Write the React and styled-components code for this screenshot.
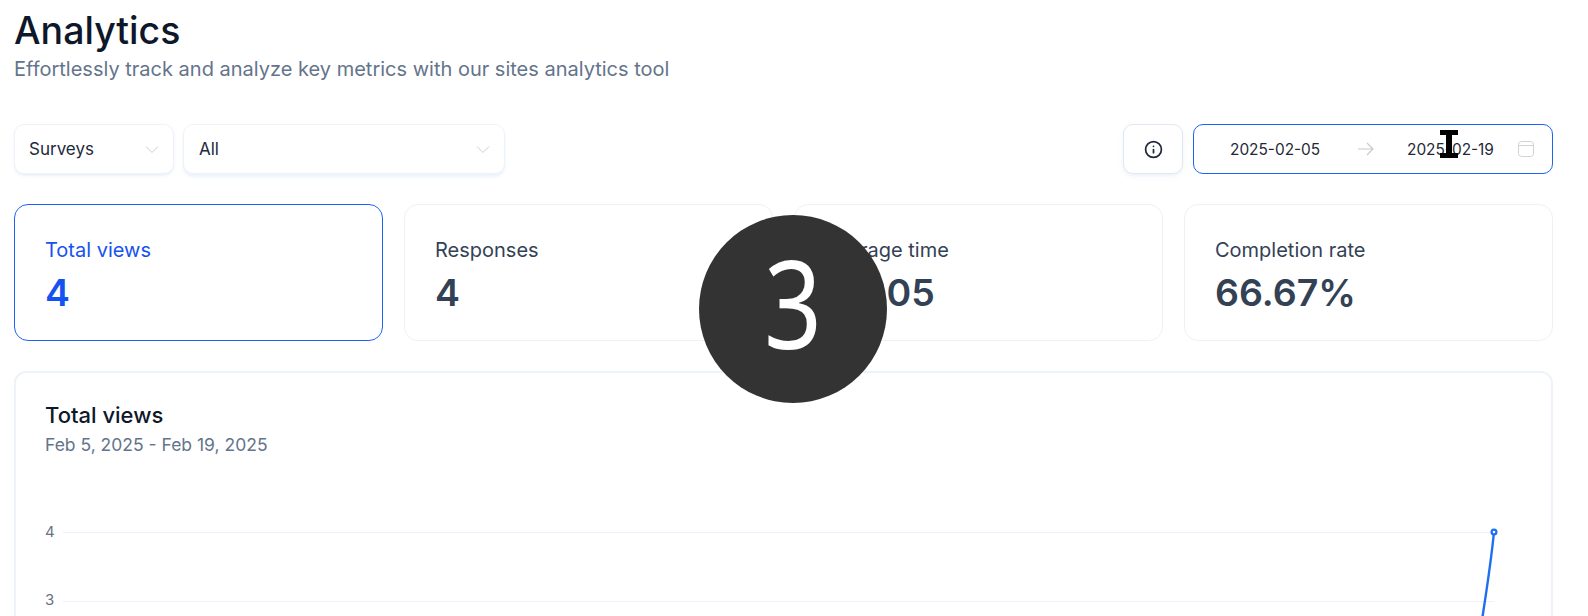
import React from 'react';
import styled, { createGlobalStyle } from 'styled-components';

const GlobalStyle = createGlobalStyle`
  html, body {
    margin: 0;
    height: 100%;
    overflow: hidden;
    background: #fff;
    font-family: Inter, "Liberation Sans", sans-serif;
  }
  #root { height: 100%; }
`;

const Page = styled.main`
  position: relative;
  height: 616px;
  overflow: hidden;
  box-sizing: border-box;
  padding: 9px 35px 0 14px;
`;

const Title = styled.h1`
  margin: 0;
  font-size: 37.5px;
  line-height: 44px;
  font-weight: 500;
  color: #0f172a;
`;

const Subtitle = styled.p`
  margin: 3px 0 0;
  font-size: 20px;
  line-height: 26px;
  color: #64748b;
`;

const Toolbar = styled.div`
  display: flex;
  justify-content: space-between;
  margin-top: 42px;
`;

const ToolGroup = styled.div`
  display: flex;
  gap: ${(props) => props.$gap}px;
`;

const Select = styled.div`
  box-sizing: border-box;
  width: ${(props) => props.$width}px;
  height: 50px;
  display: flex;
  align-items: center;
  justify-content: space-between;
  padding: 0 14px 0 ${(props) => (props.$glow ? 15 : 14)}px;
  background: #fff;
  border: 1px solid #eef2f9;
  border-radius: 10px;
  box-shadow: ${(props) => (props.$glow
    ? '0 3px 3px rgba(200, 220, 245, 0.35)'
    : '0 2px 3px rgba(190, 210, 240, 0.3)')};
  font-size: 17px;
  color: #1e293b;
`;

const InfoButton = styled.button`
  box-sizing: border-box;
  width: 60px;
  height: 50px;
  display: flex;
  align-items: center;
  justify-content: center;
  padding: 0;
  background: #fff;
  border: 1px solid #e2e8f0;
  border-radius: 10px;
  box-shadow: 0 2px 4px rgba(190, 210, 240, 0.3);
  color: #1e293b;
`;

const DatePicker = styled.div`
  box-sizing: border-box;
  width: 360px;
  height: 50px;
  display: flex;
  align-items: center;
  padding: 0 18px 0 36px;
  background: #fff;
  border: 1px solid #1d64f2;
  border-radius: 10px;
  font-size: 15.4px;
  color: #1f2937;
`;

const DateText = styled.span`
  width: 88px;
  white-space: nowrap;
`;

const DateArrow = styled.span`
  display: flex;
  margin: 0 33px 0 40px;
  color: #c4cbc6;
`;

const CalendarSlot = styled.span`
  display: flex;
  margin-left: auto;
  color: #cfd4d1;
`;

const Stats = styled.section`
  display: grid;
  grid-template-columns: repeat(4, 1fr);
  gap: 21px;
  margin-top: 30px;
`;

const StatCard = styled.div`
  box-sizing: border-box;
  height: 137px;
  padding: 31px 30px 0;
  border: 1px solid ${(props) => (props.$active ? '#1d64f2' : '#eef1f6')};
  border-radius: 14px;
  background: #fff;
  color: ${(props) => (props.$active ? '#1553f0' : '#334155')};
`;

const StatLabel = styled.div`
  font-size: 20px;
  line-height: 28px;
`;

const StatValue = styled.div`
  margin-top: 7px;
  font-size: 37.5px;
  line-height: 44px;
  font-weight: 600;
`;

const ChartPanel = styled.section`
  box-sizing: border-box;
  height: 400px;
  margin-top: 30px;
  padding: 28px 29px;
  border: 2px solid #eef2fb;
  border-radius: 12px;
  background: #fff;
`;

const ChartTitle = styled.h2`
  margin: 0;
  font-size: 22px;
  line-height: 28px;
  font-weight: 500;
  color: #0f172a;
`;

const ChartRange = styled.p`
  margin: 4px 0 0;
  font-size: 17.5px;
  line-height: 24px;
  color: #64748b;
`;

const ChartSvg = styled.svg`
  display: block;
  width: 100%;
  height: 200px;
  margin-top: 43px;
  overflow: visible;
`;

const StepBadge = styled.div`
  position: absolute;
  left: 699px;
  top: 215px;
  width: 188px;
  height: 188px;
  padding-bottom: 14px;
  box-sizing: border-box;
  display: flex;
  align-items: center;
  justify-content: center;
  border-radius: 50%;
  background: #333;
  color: #fff;
  font-family: "Noto Sans", sans-serif;
  font-size: 122px;
  font-weight: 400;
`;

const StepDigit = styled.span`
  display: inline-block;
  transform: scaleX(0.83);
`;

const TextCursor = styled.svg`
  position: absolute;
  left: 1440px;
  top: 130px;
`;

const Chevron = () => (
  <svg width="14" height="14" viewBox="0 0 14 14" fill="none" stroke="#c9ced6" strokeWidth="1">
    <path d="M1 4.5 7 10.5 13 4.5" />
  </svg>
);

const stats = [
  { label: 'Total views', value: '4', active: true },
  { label: 'Responses', value: '4' },
  { label: 'Average time', value: '00:05' },
  { label: 'Completion rate', value: '66.67%' },
];

export default function App() {
  return (
    <>
      <GlobalStyle />
      <Page>
        <Title>Analytics</Title>
        <Subtitle>Effortlessly track and analyze key metrics with our sites analytics tool</Subtitle>

        <Toolbar>
          <ToolGroup $gap={9}>
            <Select $width={160}>Surveys<Chevron /></Select>
            <Select $width={322} $glow>All<Chevron /></Select>
          </ToolGroup>
          <ToolGroup $gap={10}>
            <InfoButton aria-label="info">
              <svg width="19" height="19" viewBox="0 0 24 24" fill="none" stroke="currentColor" strokeWidth="2.2" strokeLinecap="round">
                <circle cx="12" cy="12" r="10" />
                <path d="M12 16v-4M12 8h.01" />
              </svg>
            </InfoButton>
            <DatePicker>
              <DateText>2025-02-05</DateText>
              <DateArrow>
                <svg width="16" height="14" viewBox="0 0 16 14" fill="none" stroke="currentColor" strokeWidth="1.1">
                  <path d="M0 7h15M9 1l6 6-6 6" />
                </svg>
              </DateArrow>
              <DateText>2025-02-19</DateText>
              <CalendarSlot>
                <svg width="16" height="16" viewBox="0 0 16 16" fill="none" stroke="currentColor" strokeWidth="1">
                  <rect x="0.5" y="0.5" width="15" height="15" rx="3" />
                  <path d="M0.5 4.5h15" />
                </svg>
              </CalendarSlot>
            </DatePicker>
          </ToolGroup>
        </Toolbar>

        <Stats>
          {stats.map((stat) => (
            <StatCard key={stat.label} $active={stat.active}>
              <StatLabel>{stat.label}</StatLabel>
              <StatValue>{stat.value}</StatValue>
            </StatCard>
          ))}
        </Stats>

        <ChartPanel>
          <ChartTitle>Total views</ChartTitle>
          <ChartRange>Feb 5, 2025 - Feb 19, 2025</ChartRange>
          <ChartSvg viewBox="0 0 1477 200" preserveAspectRatio="none">
            <path d="M18 32.5H1449M18 101.5H1449" stroke="#eef0fb" strokeWidth="1" />
            <text x="0" y="37" fontSize="15" fill="#6b7280">4</text>
            <text x="0" y="105" fontSize="15" fill="#6b7280">3</text>
            <path d="M1449 32C1446 62 1442 88 1437 120" fill="none" stroke="#1d6ef2" strokeWidth="2.4" />
            <circle cx="1449" cy="32" r="2.4" fill="#fff" stroke="#1d6ef2" strokeWidth="2.2" />
          </ChartSvg>
        </ChartPanel>

        <StepBadge><StepDigit>3</StepDigit></StepBadge>
        <TextCursor width="18" height="28" viewBox="0 0 18 28">
          <path d="M0 0H18V5H12V23H18V28H0V23H6V5H0Z" fill="#000" />
        </TextCursor>
      </Page>
    </>
  );
}
